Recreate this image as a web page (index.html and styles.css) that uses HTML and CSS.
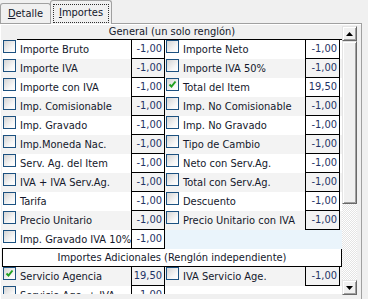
FILE: index.html
```html
<!DOCTYPE html>
<html lang="es">

<head>
    <meta charset="UTF-8">
    <title>Importes</title>
    <link rel="stylesheet" href="styles.css">
</head>

<body>

    <!-- Tabs -->
    <div class="tabs">
        <div class="tab"><u>D</u>etalle</div>
        <div class="tab active"><span class="focus"><u>I</u>mportes</span></div>
    </div>

    <!-- Panel -->
    <div class="panel">
        <div class="sheet">
            <div class="grid">
                <div class="head">General (un solo renglón)</div>

                <div class="row">
                    <div class="chk"><span class="box"></span></div>
                    <div class="lbl">Importe Bruto</div>
                    <div class="val">-1,00</div>
                    <div class="chk"><span class="box"></span></div>
                    <div class="lbl">Importe Neto</div>
                    <div class="val">-1,00</div>
                    <div class="pad"></div>
                </div>
                <div class="row alt">
                    <div class="chk"><span class="box"></span></div>
                    <div class="lbl">Importe IVA</div>
                    <div class="val">-1,00</div>
                    <div class="chk"><span class="box"></span></div>
                    <div class="lbl">Importe IVA 50%</div>
                    <div class="val">-1,00</div>
                    <div class="pad"></div>
                </div>
                <div class="row">
                    <div class="chk"><span class="box"></span></div>
                    <div class="lbl">Importe con IVA</div>
                    <div class="val">-1,00</div>
                    <div class="chk"><span class="box"><svg viewBox="0 0 11 11"><path d="M2.5 5.5 L4.5 7.5 L8.5 2.5" /></svg></span></div>
                    <div class="lbl">Total del Item</div>
                    <div class="val">19,50</div>
                    <div class="pad"></div>
                </div>
                <div class="row alt">
                    <div class="chk"><span class="box"></span></div>
                    <div class="lbl">Imp. Comisionable</div>
                    <div class="val">-1,00</div>
                    <div class="chk"><span class="box"></span></div>
                    <div class="lbl">Imp. No Comisionable</div>
                    <div class="val">-1,00</div>
                    <div class="pad"></div>
                </div>
                <div class="row">
                    <div class="chk"><span class="box"></span></div>
                    <div class="lbl">Imp. Gravado</div>
                    <div class="val">-1,00</div>
                    <div class="chk"><span class="box"></span></div>
                    <div class="lbl">Imp. No Gravado</div>
                    <div class="val">-1,00</div>
                    <div class="pad"></div>
                </div>
                <div class="row alt">
                    <div class="chk"><span class="box"></span></div>
                    <div class="lbl">Imp.Moneda Nac.</div>
                    <div class="val">-1,00</div>
                    <div class="chk"><span class="box"></span></div>
                    <div class="lbl">Tipo de Cambio</div>
                    <div class="val">-1,00</div>
                    <div class="pad"></div>
                </div>
                <div class="row">
                    <div class="chk"><span class="box"></span></div>
                    <div class="lbl">Serv. Ag. del Item</div>
                    <div class="val">-1,00</div>
                    <div class="chk"><span class="box"></span></div>
                    <div class="lbl">Neto con Serv.Ag.</div>
                    <div class="val">-1,00</div>
                    <div class="pad"></div>
                </div>
                <div class="row alt">
                    <div class="chk"><span class="box"></span></div>
                    <div class="lbl">IVA + IVA Serv.Ag.</div>
                    <div class="val">-1,00</div>
                    <div class="chk"><span class="box"></span></div>
                    <div class="lbl">Total con Serv.Ag.</div>
                    <div class="val">-1,00</div>
                    <div class="pad"></div>
                </div>
                <div class="row">
                    <div class="chk"><span class="box"></span></div>
                    <div class="lbl">Tarifa</div>
                    <div class="val">-1,00</div>
                    <div class="chk"><span class="box"></span></div>
                    <div class="lbl">Descuento</div>
                    <div class="val">-1,00</div>
                    <div class="pad"></div>
                </div>
                <div class="row alt">
                    <div class="chk"><span class="box"></span></div>
                    <div class="lbl">Precio Unitario</div>
                    <div class="val">-1,00</div>
                    <div class="chk"><span class="box"></span></div>
                    <div class="lbl">Precio Unitario con IVA</div>
                    <div class="val">-1,00</div>
                    <div class="pad"></div>
                </div>
                <div class="row">
                    <div class="chk"><span class="box"></span></div>
                    <div class="lbl">Imp. Gravado IVA 10%</div>
                    <div class="val">-1,00</div>
                    <div class="empty"></div>
                </div>

                <div class="head2">Importes Adicionales (Renglón independiente)</div>

                <div class="row alt">
                    <div class="chk"><span class="box"><svg viewBox="0 0 11 11"><path d="M2.5 5.5 L4.5 7.5 L8.5 2.5" /></svg></span></div>
                    <div class="lbl">Servicio Agencia</div>
                    <div class="val">19,50</div>
                    <div class="chk"><span class="box"></span></div>
                    <div class="lbl">IVA Servicio Age.</div>
                    <div class="val">-1,00</div>
                    <div class="pad"></div>
                </div>
                <div class="row">
                    <div class="chk"><span class="box"></span></div>
                    <div class="lbl">Servicio Age. + IVA</div>
                    <div class="val">-1,00</div>
                    <div class="blank"></div>
                </div>
            </div>

            <!-- Scrollbar -->
            <div class="scrollbar">
                <div class="sb-btn"><svg width="7" height="4" viewBox="0 0 7 4"><path d="M3.5 0 L7 4 L0 4 Z" /></svg></div>
                <div class="sb-thumb"></div>
                <div class="sb-track"></div>
                <div class="sb-btn"><svg width="7" height="4" viewBox="0 0 7 4"><path d="M0 0 L7 0 L3.5 4 Z" /></svg></div>
            </div>
        </div>
    </div>

</body>

</html>
```

FILE: styles.css
```css
body {
    margin: 0;
    width: 368px;
    height: 299px;
    overflow: hidden;
    background-color: #f0f0f0;
    font-family: "DejaVu Sans Condensed", "DejaVu Sans", sans-serif;
    font-size: 11px;
    color: #14182b;
}

/* Tabs */
.tabs {
    display: flex;
    align-items: flex-end;
    height: 23px;
}

.tab {
    width: 51px;
    height: 20px;
    box-sizing: border-box;
    border: 1px solid #a0a0a0;
    border-bottom: none;
    border-radius: 3px 3px 0 0;
    background-color: #f0f0f0;
    text-align: center;
    line-height: 19px;
}

.tab.active {
    width: 62px;
    height: 24px;
    margin-left: -1px;
    margin-bottom: -1px;
    padding: 3px 2px 0;
    position: relative;
    z-index: 1;
}

.focus {
    display: block;
    height: 19px;
    box-sizing: border-box;
    border: 1px dotted #303030;
    line-height: 16px;
}

/* Panel */
.panel {
    width: 362px;
    height: 276px;
    box-sizing: border-box;
    border-top: 1px solid #a0a0a0;
    border-right: 1px solid #a0a0a0;
    box-shadow: inset 1px 1px #ffffff;
    padding: 1px 0 0 2px;
}

.sheet {
    display: flex;
    height: 270px;
}

.grid {
    width: 340px;
    height: 269px;
    overflow: hidden;
}

.head {
    height: 15px;
    box-sizing: border-box;
    margin-left: 15px;
    padding-right: 15px;
    border-bottom: 1px solid #000000;
    text-align: center;
    line-height: 13px;
}

.head2 {
    height: 19px;
    box-sizing: border-box;
    margin-top: -1px;
    border: 1px solid #000000;
    background-color: #ffffff;
    text-align: center;
    line-height: 17px;
}

.row {
    display: grid;
    grid-template-columns: 15px 114px 34px 15px 125px 35px 2px;
    height: 19px;
    background-color: #ffffff;
}

.row.alt {
    background-color: #f3f3f3;
}

.lbl {
    padding-left: 3px;
    line-height: 19px;
    white-space: nowrap;
    overflow: hidden;
}

.val {
    box-sizing: border-box;
    border: 1px solid #000000;
    border-top: none;
    padding-right: 2px;
    text-align: right;
    line-height: 18px;
    color: #1f3366;
}

.empty {
    grid-column: 4 / 8;
    background-color: #eaf4fb;
}

.blank {
    grid-column: 4 / 8;
    background-color: #ffffff;
}

/* Checkboxes */
.box {
    display: block;
    width: 13px;
    height: 13px;
    box-sizing: border-box;
    margin-left: 1px;
    border: 1px solid #1c5180;
    background: linear-gradient(135deg, #d4d4d4, #f6f6f6 65%, #ffffff);
}

.box svg {
    display: block;
    width: 11px;
    height: 11px;
}

.box path {
    fill: none;
    stroke: #21a121;
    stroke-width: 2;
}

/* Scrollbar */
.scrollbar {
    display: flex;
    flex-direction: column;
    width: 15px;
    height: 269px;
    margin-top: 1px;
}

.sb-btn,
.sb-thumb {
    box-sizing: border-box;
    background-color: #f0f0f0;
    border: 1px solid;
    border-color: #e3e3e3 #696969 #696969 #e3e3e3;
    box-shadow: inset 1px 1px #ffffff, inset -1px -1px #a0a0a0;
}

.sb-btn {
    height: 15px;
    display: flex;
    align-items: center;
    justify-content: center;
}

.sb-btn path {
    fill: #000000;
}

.sb-thumb {
    height: 163px;
}

.sb-track {
    flex: 1;
    background-color: #ffffff;
    background-image: repeating-conic-gradient(#e4e4e4 0 25%, #ffffff 0 50%);
    background-size: 2px 2px;
}
```
